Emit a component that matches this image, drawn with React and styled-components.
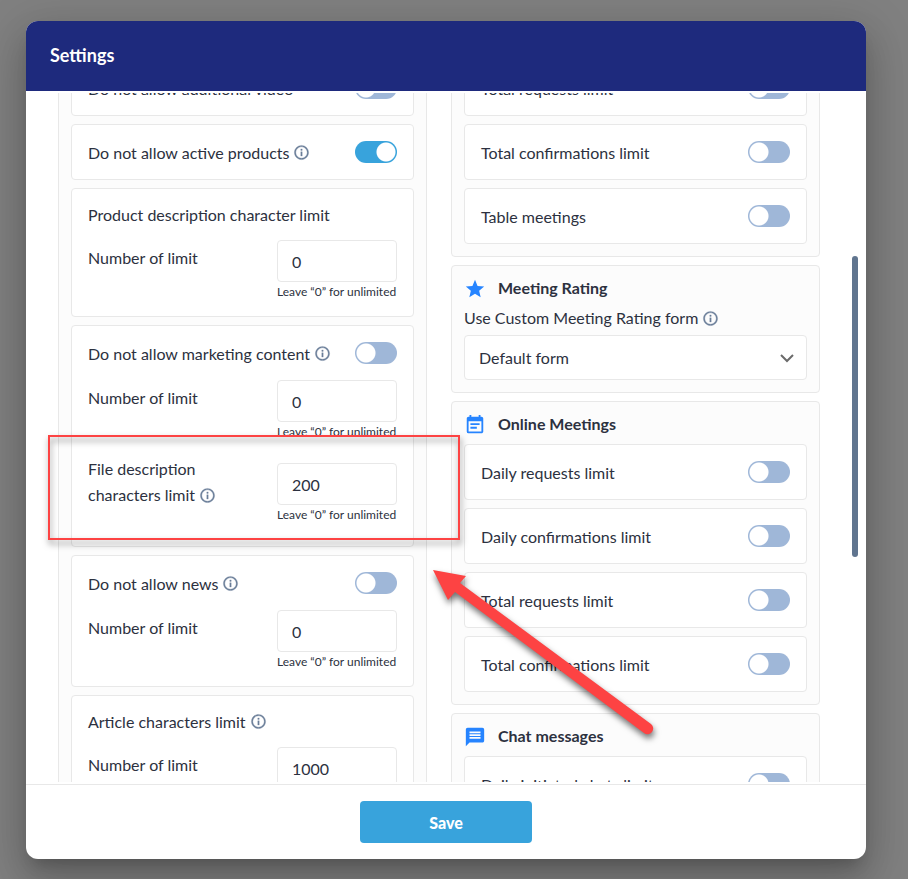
import React, { useLayoutEffect, useRef } from 'react'
import styled, { createGlobalStyle } from 'styled-components';
import { MdInfoOutline, MdStar, MdEventNote, MdMessage } from 'react-icons/md';

const GlobalStyle = createGlobalStyle`
  * {
    box-sizing: border-box;
  }
  body {
    margin: 0;
    background-color: #808080;
    color: #2c3140;
    font-family: Lato, "Open Sans", sans-serif;
    font-size: 16px;
  }
`;

const Backdrop = styled.div`
  position: relative;
  display: flex;
  height: 100vh;
  padding: 21px 42px 20px 26px;
  overflow: hidden;
`;

const Dialog = styled.div`
  display: flex;
  flex: 1;
  flex-direction: column;
  min-width: 0;
  border-radius: 12px;
  background-color: white;
  box-shadow: 0 11px 15px -7px rgba(0, 0, 0, .2),
    0 24px 38px 3px rgba(0, 0, 0, .14),
    0 9px 46px 8px rgba(0, 0, 0, .12);
  overflow: hidden;
`;

const Header = styled.header`
  display: flex;
  align-items: center;
  height: 70px;
  padding: 0 24px 2px;
  background-color: #1e2a7d;
  color: white;
`;

const Title = styled.h1`
  margin: 0;
  font-size: 18px;
  font-weight: 700;
`;

const Body = styled.div`
  position: relative;
  flex: 1;
  min-height: 0;
  padding: 2px 0;
`;

const Scroller = styled.div`
  height: 100%;
  padding: 0 46px 0 32px;
  overflow-y: auto;
  scrollbar-width: none;
`;

const ScrollThumb = styled.div`
  position: absolute;
  top: 165px;
  right: 8px;
  width: 6px;
  height: 301px;
  border-radius: 3px;
  background-color: #60758f;
`;

const Columns = styled.div`
  display: grid;
  grid-template-columns: 1fr 1fr;
  align-items: start;
  gap: 24px;
`;

const Stack = styled.div`
  display: flex;
  flex-direction: column;
  gap: 8px;
`;

const Panel = styled.section`
  padding: ${props => props.$titled ? '10px' : '12px'} 12px 12px;
  border: 1px solid #e8e8e8;
  border-radius: 4px;
  background-color: #fcfcfc;
`;

const PanelTitle = styled.h2`
  display: flex;
  align-items: center;
  gap: 12px;
  height: 24px;
  margin: 0 0 8px;
  padding-bottom: 2px;
  font-size: 16px;
  font-weight: 700;

  svg {
    width: 22px;
    height: 22px;
    margin-top: 4px;
    color: #2684ff;
  }
`;

const Card = styled.div`
  display: flex;
  flex-direction: column;
  gap: 14px;
  padding: 14px 16px;
  border: 1px solid #e8e8e8;
  border-radius: 4px;
  background-color: white;
`;

const Info = styled(MdInfoOutline)`
  width: 17px;
  height: 17px;
  margin-left: 4px;
  color: #6b7f99;
  vertical-align: -3px;

  path:last-child {
    stroke: currentColor;
    stroke-width: .4;
  }
`;

const CardHead = styled.div`
  display: flex;
  align-items: center;
  justify-content: space-between;
  height: ${props => props.$toggle ? '26px' : '23px'};

  ${Info} {
    vertical-align: -2px;
  }
`;

const Switch = styled.input`
  appearance: none;
  flex: none;
  width: 42px;
  height: 22px;
  margin: 0;
  border-radius: 11px;
  background: radial-gradient(circle at 11px 11px, white 9px, transparent 10px) #9fb7d8;
  cursor: pointer;

  &:checked {
    background: radial-gradient(circle at 31px 11px, white 9px, transparent 10px) #38a3dc;
  }
`;

const FieldRow = styled.div`
  display: flex;
  justify-content: space-between;
`;

const FieldLabel = styled.label`
  flex: 1;
  padding: ${props => props.$wide ? '0' : '5px'} 16px 0 0;
  line-height: 26px;
`;

const FieldControl = styled.div`
  width: 120px;
  padding: ${props => props.$wide ? '7px' : '0'} 0;
`;

const TextInput = styled.input`
  display: block;
  width: 100%;
  height: 42px;
  padding: 0 14px;
  border: 1px solid #e8e8e8;
  border-radius: 4px;
  background-color: white;
  color: inherit;
  font: inherit;
`;

const Hint = styled.div`
  font-size: 12px;
  line-height: 20px;
  white-space: nowrap;
`;

const SelectLabel = styled.label`
  display: block;
  margin-bottom: 7px;
  line-height: 20px;
`;

const Select = styled.select`
  appearance: none;
  display: block;
  width: 100%;
  height: 45px;
  padding: 0 14px;
  border: 1px solid #e8e8e8;
  border-radius: 4px;
  background-color: white;
  color: inherit;
  font: inherit;
`;

const SelectWrap = styled.div`
  position: relative;
`;

const Chevron = styled.svg`
  position: absolute;
  top: 18px;
  right: 13px;
  width: 14px;
  height: 10px;
  pointer-events: none;
`;

const Footer = styled.footer`
  display: flex;
  justify-content: center;
  padding: 16px;
  border-top: 1px solid #e8e8e8;
`;

const SaveButton = styled.button`
  width: 172px;
  height: 42px;
  border: 0;
  border-radius: 4px;
  background-color: #38a3dc;
  color: white;
  font: inherit;
  font-weight: 900;
  cursor: pointer;
`;

// Annotations drawn over the dialog
const Highlight = styled.div`
  position: absolute;
  top: 435px;
  left: 48px;
  width: 412px;
  height: 105px;
  border: 2px solid #fd4343;
  filter: drop-shadow(1px 4px 3px rgba(0, 0, 0, .5));
  pointer-events: none;
`;

const Arrow = styled.svg`
  position: absolute;
  top: 560px;
  left: 425px;
  width: 245px;
  height: 190px;
  filter: drop-shadow(1px 4px 3px rgba(0, 0, 0, .55));
  pointer-events: none;
`;

function ToggleHead({ id, label, info, checked }) {
  return (
    <CardHead $toggle>
      <label htmlFor={id}>{label}{info && <Info />}</label>
      <Switch type="checkbox" id={id} defaultChecked={checked} />
    </CardHead>
  );
}

function ToggleCard(props) {
  return (
    <Card>
      <ToggleHead {...props} />
    </Card>
  );
}

function LimitField({ id, label = 'Number of limit', value, info, wide }) {
  return (
    <FieldRow>
      <FieldLabel htmlFor={id} $wide={wide}>{label}{info && <Info />}</FieldLabel>
      <FieldControl $wide={wide}>
        <TextInput id={id} type="text" inputMode="numeric" defaultValue={value} />
        <Hint>Leave “0” for unlimited</Hint>
      </FieldControl>
    </FieldRow>
  );
}

const onlineLimits = [
  'Daily requests limit',
  'Daily confirmations limit',
  'Total requests limit',
  'Total confirmations limit',
];

export default function App() {
  const scroller = useRef(null);

  useLayoutEffect(() => {
    scroller.current.scrollTop = 46;
  }, []);

  return (
    <>
    <GlobalStyle />
    <Backdrop>
      <Dialog role="dialog" aria-labelledby="settings-title">
        <Header>
          <Title id="settings-title">Settings</Title>
        </Header>
        <Body>
          <Scroller ref={scroller}>
            <Columns>
              <Panel>
                <Stack>
                  <ToggleCard id="video" label="Do not allow additional video" />
                  <ToggleCard id="products" label="Do not allow active products" info checked />
                  <Card>
                    <CardHead>Product description character limit</CardHead>
                    <LimitField id="product-limit" value="0" />
                  </Card>
                  <Card>
                    <ToggleHead id="marketing" label="Do not allow marketing content" info />
                    <LimitField id="marketing-limit" value="0" />
                    <LimitField id="file-limit" label="File description characters limit" value="200" info wide />
                  </Card>
                  <Card>
                    <ToggleHead id="news" label="Do not allow news" info />
                    <LimitField id="news-limit" value="0" />
                  </Card>
                  <Card>
                    <CardHead><span>Article characters limit<Info /></span></CardHead>
                    <LimitField id="article-limit" value="1000" />
                  </Card>
                </Stack>
              </Panel>
              <Stack>
                <Panel>
                  <Stack>
                    <ToggleCard id="total-requests" label="Total requests limit" />
                    <ToggleCard id="total-confirmations" label="Total confirmations limit" />
                    <ToggleCard id="table-meetings" label="Table meetings" />
                  </Stack>
                </Panel>
                <Panel $titled>
                  <PanelTitle><MdStar />Meeting Rating</PanelTitle>
                  <SelectLabel htmlFor="rating-form">Use Custom Meeting Rating form<Info /></SelectLabel>
                  <SelectWrap>
                    <Select id="rating-form">
                      <option>Default form</option>
                    </Select>
                    <Chevron viewBox="0 0 14 10">
                      <path d="M1 2l6 6 6-6" fill="none" stroke="#6b6b6b" strokeWidth="2" />
                    </Chevron>
                  </SelectWrap>
                </Panel>
                <Panel $titled>
                  <PanelTitle><MdEventNote />Online Meetings</PanelTitle>
                  <Stack>
                    {onlineLimits.map((label, i) => <ToggleCard key={label} id={'online-' + i} label={label} />)}
                  </Stack>
                </Panel>
                <Panel $titled>
                  <PanelTitle><MdMessage />Chat messages</PanelTitle>
                  <ToggleCard id="chats" label="Daily initiated chats limit" />
                </Panel>
              </Stack>
            </Columns>
          </Scroller>
          <ScrollThumb />
        </Body>
        <Footer>
          <SaveButton type="button">Save</SaveButton>
        </Footer>
      </Dialog>
      <Highlight />
      <Arrow viewBox="425 560 245 190">
        <path
          d="M433 570L466 576L460 583L651 724A5.5 5.5 0 0 1 644 733L455 592L448 600Z"
          fill="#fd4343" />
      </Arrow>
    </Backdrop>
    </>
  )
}
